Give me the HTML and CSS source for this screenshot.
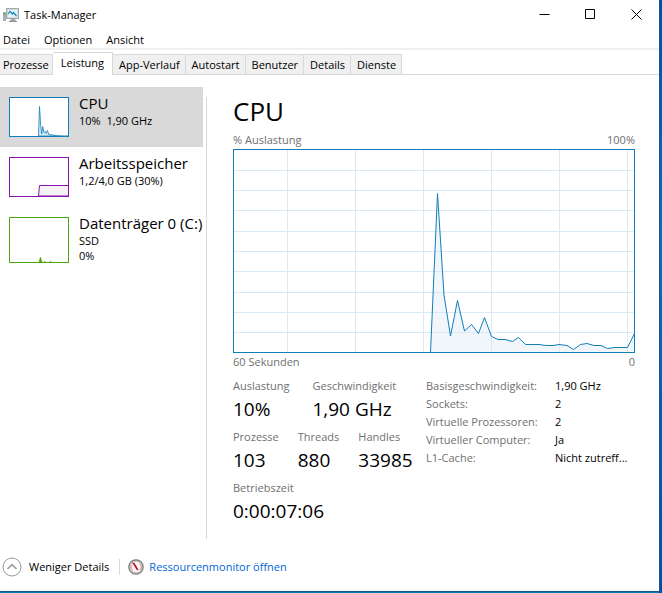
FILE: index.html
```html
<!DOCTYPE html>
<html lang="de">
<head>
    <meta charset="UTF-8">
    <meta name="viewport" content="width=device-width, initial-scale=1.0">
    <title>Task-Manager</title>
    <link rel="stylesheet" href="styles.css">
</head>
<body>
    <div class="window">
        <header class="titlebar">
            <svg class="app-icon" viewBox="0 0 16 16">
                <rect x="0" y="5" width="3" height="9" fill="#a9b0b4"/>
                <rect x="1" y="6" width="1" height="2" fill="#20c030"/>
                <path d="M8 12h4l1 2H7z" fill="#a5a5a5"/>
                <rect x="6" y="14" width="8" height="1" fill="#8d8d8d"/>
                <rect x="3.5" y="1.5" width="12" height="10" fill="#d3d8db" stroke="#a3a9ad"/>
                <rect x="5" y="3" width="9" height="7" fill="#e1f4fc"/>
                <path d="M5 7l2-2.500L9.500 7l1-1.500L13.500 9" fill="none" stroke="#1683b7" stroke-width="1.200"/>
            </svg>
            <h1 class="title">Task-Manager</h1>
            <div class="window-buttons">
                <button class="window-btn" aria-label="Minimieren"><svg viewBox="0 0 11 11"><path d="M.5 5.500h10"/></svg></button>
                <button class="window-btn" aria-label="Maximieren"><svg viewBox="0 0 11 11"><path d="M.5.5h9v9h-9z"/></svg></button>
                <button class="window-btn" aria-label="Schließen"><svg viewBox="0 0 11 11"><path d="M.5.5l10 10M10.500.5l-10 10"/></svg></button>
            </div>
        </header>

        <nav class="menu">
            <button class="menu-item">Datei</button>
            <button class="menu-item">Optionen</button>
            <button class="menu-item">Ansicht</button>
        </nav>

        <nav class="tabs">
            <button class="tab">Prozesse</button>
            <button class="tab active">Leistung</button>
            <button class="tab">App-Verlauf</button>
            <button class="tab">Autostart</button>
            <button class="tab">Benutzer</button>
            <button class="tab">Details</button>
            <button class="tab">Dienste</button>
        </nav>

        <div class="content">
            <aside class="sidebar">
                <button class="resource active">
                    <svg class="thumb" viewBox="0 0 60 40">
                        <rect x=".5" y=".5" width="59" height="39" fill="#fff" stroke="#117dbb"/>
                        <path d="M29.500 39L30.500 9.500l1.200 19 1 8.500 1-7.500 1.200 6 1.500-1 1 2 1-3 1.500 4 4 .5 3 .8 5 .2 4 .5 3-.5 2-1V39z" fill="#dcebf4" stroke="#117dbb" stroke-width=".8"/>
                    </svg>
                    <span class="resource-text">
                        <span class="resource-name">CPU</span>
                        <span class="resource-info">10%&nbsp; 1,90 GHz</span>
                    </span>
                </button>
                <button class="resource">
                    <svg class="thumb" viewBox="0 0 60 40">
                        <path d="M29.500 39L30.500 28.500H59.500V39z" fill="#f4f2f4" stroke="#8b12ae"/>
                        <rect x=".5" y=".5" width="59" height="39" fill="none" stroke="#8b12ae"/>
                    </svg>
                    <span class="resource-text">
                        <span class="resource-name">Arbeitsspeicher</span>
                        <span class="resource-info">1,2/4,0 GB (30%)</span>
                    </span>
                </button>
                <button class="resource">
                    <svg class="thumb tall" viewBox="0 0 60 46">
                        <rect x=".5" y=".5" width="59" height="45" fill="#fff" stroke="#4da60c"/>
                        <path d="M30 45l1.500-5L33 45zM35 45l.5-1 .5 1zM41 45l.5-1 .5 1z" fill="#4da60c" stroke="#4da60c" stroke-width=".5"/>
                    </svg>
                    <span class="resource-text">
                        <span class="resource-name">Datenträger 0 (C:)</span>
                        <span class="resource-info">SSD</span>
                        <span class="resource-info">0%</span>
                    </span>
                </button>
            </aside>

            <main class="details">
                <h2 class="heading">CPU</h2>
                <div class="axis top"><span>% Auslastung</span><span>100%</span></div>
                <svg class="chart" viewBox="0 0 402 204" preserveAspectRatio="none">
                    <path class="area" d="M197.500 203.500L204.500 44.500 211 146l6.500 41 7-35.500 7 30.500 7-6.500 7 9 6-16 7 19 6.500 3h7l7.500 2 6-4 7 7H306l7 1h7l6-1 8 1 6.500 4 7-5 6.500-1 7 2h7l6.500 3 7.500-1h12.500l7-14v70z"/>
                    <path class="grid" d="M54.500 1v202M122.500 1v202M190.500 1v202M258.500 1v202M326.500 1v202M394.500 1v202M1 21.500h400M1 41.500h400M1 61.500h400M1 82.500h400M1 102.500h400M1 122.500h400M1 143.500h400M1 163.500h400M1 183.500h400"/>
                    <path class="line" d="M197.500 203.500L204.500 44.500 211 146l6.500 41 7-35.500 7 30.500 7-6.500 7 9 6-16 7 19 6.500 3h7l7.500 2 6-4 7 7H306l7 1h7l6-1 8 1 6.500 4 7-5 6.500-1 7 2h7l6.500 3 7.500-1h12.500l7-14"/>
                    <rect class="frame" x=".5" y=".5" width="401" height="203"/>
                </svg>
                <div class="axis bottom"><span>60 Sekunden</span><span>0</span></div>

                <div class="stats">
                    <div class="live">
                        <dl class="stat-row">
                            <div class="stat wide"><dt>Auslastung</dt><dd>10%</dd></div>
                            <div class="stat"><dt>Geschwindigkeit</dt><dd>1,90 GHz</dd></div>
                        </dl>
                        <dl class="stat-row">
                            <div class="stat"><dt>Prozesse</dt><dd>103</dd></div>
                            <div class="stat"><dt>Threads</dt><dd>880</dd></div>
                            <div class="stat"><dt>Handles</dt><dd>33985</dd></div>
                        </dl>
                        <dl class="stat-row">
                            <div class="stat"><dt>Betriebszeit</dt><dd>0:00:07:06</dd></div>
                        </dl>
                    </div>
                    <table class="facts">
                        <tr><th>Basisgeschwindigkeit:</th><td>1,90 GHz</td></tr>
                        <tr><th>Sockets:</th><td>2</td></tr>
                        <tr><th>Virtuelle Prozessoren:</th><td>2</td></tr>
                        <tr><th>Virtueller Computer:</th><td>Ja</td></tr>
                        <tr><th>L1-Cache:</th><td>Nicht zutreff...</td></tr>
                    </table>
                </div>
            </main>
        </div>

        <footer class="footer">
            <button class="less-btn">
                <svg class="less-icon" viewBox="0 0 20 20"><circle cx="10" cy="10" r="9" fill="#fff" stroke="#999"/><path d="M5.500 12L10 7.500l4.500 4.500" fill="none" stroke="#999" stroke-width="1.500"/></svg>
                <span>Weniger Details</span>
            </button>
            <a class="monitor-link" href="#">
                <svg class="monitor-icon" viewBox="0 0 16 16">
                    <circle cx="8" cy="8" r="7.200" fill="#d4d0cc" stroke="#777" stroke-width="1.200"/>
                    <circle cx="8" cy="8" r="5.500" fill="#fff" stroke="#aaa29c" stroke-width=".6"/>
                    <path d="M4.500 11.500A5 5 0 0 1 4 6M11.500 4.500A5 5 0 0 1 12 11" fill="none" stroke="#d7a38a"/>
                    <path d="M4 3.500L6.500 4l4 6.500-1.500 1z" fill="#c8101c"/>
                </svg>
                <span>Ressourcenmonitor öffnen</span>
            </a>
        </footer>
    </div>
</body>
</html>
```
FILE: styles.css
```css
* {
    margin: 0;
    padding: 0;
    box-sizing: border-box;
}

body {
    min-height: 100vh;
    display: flex;
    padding: 0 3px 2px 0;
    font-family: 'Open Sans', 'Noto Sans', sans-serif;
    font-size: 11px;
    line-height: 16px;
    color: #000;
    background: linear-gradient(#004db0, #0a6cc4 40%, #004fa8);
}

button {
    font: inherit;
    color: inherit;
    background: none;
    border: none;
    text-align: left;
}

svg {
    display: block;
    flex: none;
}

.window {
    flex: 1;
    min-width: 0;
    display: flex;
    flex-direction: column;
    background: #fff;
    box-shadow: 0 0 0 1px #16588c, 0 2px 0 #0083b0;
}

/* Title bar */
.titlebar {
    display: flex;
    align-items: center;
    height: 30px;
    padding-left: 3px;
}

.app-icon {
    width: 16px;
    height: 16px;
    margin-right: 5px;
}

.title {
    font-size: 11px;
    font-weight: normal;
}

.window-buttons {
    display: flex;
    height: 100%;
    margin-left: auto;
}

.window-btn {
    display: flex;
    align-items: center;
    justify-content: center;
    width: 46px;
    padding-bottom: 2px;
}

.window-btn svg {
    width: 11px;
    height: 11px;
    fill: none;
    stroke: #000;
}

/* Menu and tabs */
.menu {
    display: flex;
    gap: 14px;
    height: 20px;
    padding: 2px 3px 0;
    line-height: 16px;
    border-bottom: 2px solid #f0f0f0;
}

.tabs {
    display: flex;
    align-items: flex-end;
    height: 25px;
    border-bottom: 1px solid #d9d9d9;
}

.tab {
    height: 20px;
    padding: 0 5px 0 6px;
    background: #f0f0f0;
    border: solid #d9d9d9;
    border-width: 1px 1px 0 0;
}

.tab:first-child {
    padding: 0 3px;
}

.tab.active {
    height: 23px;
    margin-bottom: -1px;
    padding: 0 8px 2px;
    background: #fff;
}

/* Resource list */
.content {
    flex: 1;
    display: flex;
    padding-top: 12px;
}

.sidebar {
    width: 203px;
    flex: none;
}

.resource {
    display: flex;
    gap: 10px;
    width: 100%;
    min-height: 60px;
    padding: 6px 0 0 9px;
    white-space: nowrap;
}

.resource.active {
    background: #d9d9d9;
}

.thumb {
    width: 60px;
    height: 40px;
    margin-top: 4px;
}

.thumb.tall {
    height: 46px;
}

.resource-text {
    display: flex;
    flex-direction: column;
}

.resource-name {
    font-size: 15px;
    line-height: 20px;
}

.resource-info {
    line-height: 15px;
}

/* CPU details */
.details {
    flex: 1;
    min-width: 0;
    margin: 10px 0 0 3px;
    padding: 0 24px 0 26px;
    border-left: 1px solid #d9d9d9;
}

.heading {
    font-size: 26px;
    font-weight: normal;
    line-height: 28px;
    margin-bottom: 8px;
}

.axis {
    display: flex;
    justify-content: space-between;
    color: #707070;
}

.axis.top {
    line-height: 14px;
    padding-bottom: 2px;
}

.axis.bottom {
    padding-top: 1px;
}

.chart {
    width: 100%;
    height: 204px;
}

.area {
    fill: #f1f6fa;
}

.grid {
    fill: none;
    stroke: #d9eaf4;
}

.line,
.frame {
    fill: none;
    stroke: #117dbb;
}

.stats {
    display: flex;
    margin: 7px -24px 0 0;
}

.live {
    width: 193px;
    flex: none;
    padding-top: 1px;
}

.stat-row {
    display: flex;
    gap: 19px;
    height: 51px;
}

.stat.wide {
    padding-right: 4px;
}

.stat dt {
    color: #707070;
}

.stat dd {
    font-size: 19px;
    line-height: 30px;
    white-space: nowrap;
}

.facts {
    align-self: flex-start;
    border-collapse: collapse;
    line-height: 18px;
    white-space: nowrap;
}

.facts th {
    width: 129px;
    font-weight: normal;
    text-align: left;
    color: #707070;
}

/* Footer */
.footer {
    display: flex;
    align-items: center;
    height: 52px;
    padding: 3px 0 0 2px;
}

.less-btn {
    display: flex;
    align-items: center;
    gap: 7px;
}

.less-icon {
    width: 20px;
    height: 20px;
}

.monitor-link {
    display: flex;
    align-items: center;
    gap: 5px;
    margin-left: 10px;
    padding-left: 8px;
    color: #0066d4;
    text-decoration: none;
    border-left: 1px solid #d9d9d9;
}

.monitor-icon {
    width: 16px;
    height: 16px;
}
```
